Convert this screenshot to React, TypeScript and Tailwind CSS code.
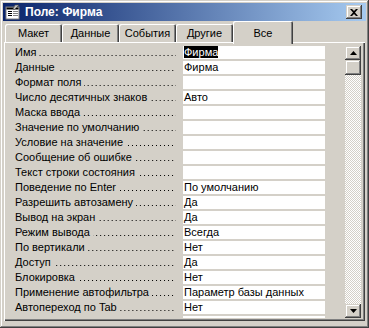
import React from 'react';

const rows: [string, string][] = [
  ['Имя', 'Фирма'],
  ['Данные', 'Фирма'],
  ['Формат поля', ''],
  ['Число десятичных знаков', 'Авто'],
  ['Маска ввода', ''],
  ['Значение по умолчанию', ''],
  ['Условие на значение', ''],
  ['Сообщение об ошибке', ''],
  ['Текст строки состояния', ''],
  ['Поведение по Enter', 'По умолчанию'],
  ['Разрешить автозамену', 'Да'],
  ['Вывод на экран', 'Да'],
  ['Режим вывода', 'Всегда'],
  ['По вертикали', 'Нет'],
  ['Доступ', 'Да'],
  ['Блокировка', 'Нет'],
  ['Применение автофильтра', 'Параметр базы данных'],
  ['Автопереход по Tab', 'Нет'],
  ['Переход по Tab', 'Да'],
];

const tabs = ['Макет', 'Данные', 'События', 'Другие'];

const raised =
  'bg-[#d4d0c8] shadow-[inset_-1px_-1px_#404040,inset_1px_1px_#d4d0c8,inset_-2px_-2px_#808080,inset_2px_2px_#ffffff]';

const Arrow: React.FC<{ down?: boolean }> = ({ down }) => (
  <svg width="7" height="4" viewBox="0 0 7 4">
    <path d={down ? 'M0 0h7L3.5 4z' : 'M3.5 0L7 4H0z'} fill="#000" />
  </svg>
);

const SheetIcon = () => (
  <svg width="16" height="16" viewBox="0 0 16 16">
    <rect x="1" y="3" width="13" height="12" fill="#fff" stroke="#808080" />
    <rect x="1.5" y="3.5" width="12" height="2" fill="#000" />
    <rect x="3" y="7" width="4" height="1" fill="#000" />
    <rect x="8" y="7" width="5" height="1" fill="#808080" />
    <rect x="3" y="9" width="4" height="1" fill="#000" />
    <rect x="8" y="9" width="5" height="1" fill="#808080" />
    <rect x="3" y="11" width="4" height="1" fill="#000" />
    <rect x="8" y="11" width="5" height="1" fill="#808080" />
    <path d="M10 1l4 0-5 5-1-1z" fill="#c0c0c0" stroke="#404040" strokeWidth="0.6" />
  </svg>
);

export default function App() {
  return (
    <div
      className={`w-[369px] h-[328px] flex flex-col p-[3px] overflow-hidden font-['Liberation_Sans',Arial,sans-serif] text-[11px] text-black ${raised}`}
    >
      {/* title bar */}
      <div className="h-[18px] shrink-0 flex items-center pl-[2px] pr-[4px] bg-[linear-gradient(to_right,#0a246a,#a6caf0)]">
        <SheetIcon />
        <span className="ml-[4px] text-white font-bold text-[12px] leading-none">Поле: Фирма</span>
        <div className="flex-1" />
        <div className={`w-[16px] h-[14px] flex items-center justify-center ${raised}`}>
          <svg width="8" height="7" viewBox="0 0 8 7">
            <path d="M0 0h2l2 2 2-2h2L5 3.5 8 7H6L4 5 2 7H0l3-3.5z" fill="#000" />
          </svg>
        </div>
      </div>

      {/* tabs */}
      <div className="h-[21px] shrink-0 flex items-end pl-[2px]">
        {tabs.map((t) => (
          <div
            key={t}
            className="w-[57px] h-[18px] shrink-0 flex items-center justify-center rounded-t-[2px] bg-[#d4d0c8] shadow-[inset_1px_1px_#ffffff,inset_-1px_0_#404040,inset_-2px_0_#808080] leading-none pt-[1px]"
          >
            {t}
          </div>
        ))}
        <div className="relative z-10 w-[60px] h-[23px] -mb-[2px] shrink-0 flex items-start justify-center pt-[7px] rounded-t-[2px] bg-[#d4d0c8] shadow-[inset_1px_1px_#ffffff,inset_-1px_0_#404040,inset_-2px_0_#808080] leading-none">
          Все
        </div>
      </div>

      {/* panel */}
      <div className="flex-1 min-h-0 mx-[1px] mb-[4px] flex pt-[4px] pb-[3px] pl-[8px] pr-[4px] shadow-[inset_1px_1px_#ffffff,inset_-1px_-1px_#404040,inset_-2px_-2px_#808080]">
        <div className="flex-1 min-w-0 flex flex-col overflow-hidden">
          {rows.map(([label, value], i) => (
            <div key={i} className="h-[15px] shrink-0 flex">
              <div className="w-[170px] h-[13px] flex pl-[3px] pr-[6px] leading-[13px]">
                <span className="whitespace-nowrap">{label}</span>
                <div className="flex-1 ml-[3px] h-[10px] bg-[image:linear-gradient(to_right,#000_1px,transparent_1px)] bg-[length:4px_1px] bg-[position:right_bottom] bg-repeat-x" />
              </div>
              <div className="w-[142px] ml-[1px] h-[13px] bg-white leading-[13px] pl-[1px] whitespace-nowrap">
                {i === 0 ? <span className="bg-black text-white">{value}</span> : value}
              </div>
            </div>
          ))}
        </div>

        {/* scrollbar */}
        <div className="w-[16px] shrink-0 flex flex-col">
          <div className={`h-[14px] shrink-0 flex items-center justify-center ${raised}`}>
            <Arrow />
          </div>
          <div className={`h-[15px] shrink-0 ${raised}`} />
          <div className="flex-1 bg-[image:repeating-conic-gradient(#ffffff_0%_25%,#d4d0c8_0%_50%)] bg-[length:2px_2px]" />
          <div className={`h-[14px] shrink-0 flex items-center justify-center ${raised}`}>
            <Arrow down />
          </div>
        </div>
      </div>
    </div>
  );
}
